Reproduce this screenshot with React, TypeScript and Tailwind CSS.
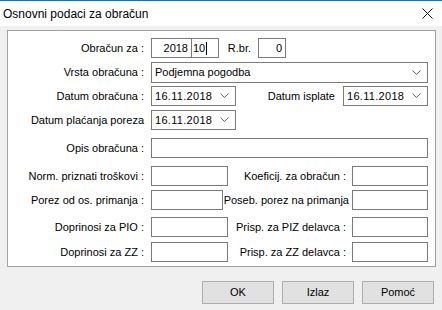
import React from "react";

function Chevron() {
  return (
    <svg width="9" height="6" viewBox="0 0 9 6" className="shrink-0">
      <polyline points="0.5,0.5 4.5,4.5 8.5,0.5" fill="none" stroke="#606060" strokeWidth="1" />
    </svg>
  );
}

function Label({ text, w = "w-[136px]" }: { text: string; w?: string }) {
  return <div className={`${w} shrink-0 text-right whitespace-nowrap pr-0`}>{text}</div>;
}

function Box({ w, h = "h-[20px]", children, extra = "" }: { w: string; h?: string; children?: React.ReactNode; extra?: string }) {
  return (
    <div className={`${w} ${h} shrink-0 border border-[#7a7a7a] bg-white flex items-center ${extra}`}>{children}</div>
  );
}

function DateBox({ w }: { w: string }) {
  return (
    <Box w={w} extra="pl-[3px] pr-[6px] justify-between">
      <span className="tracking-[0.3px]">16.11.2018</span>
      <Chevron />
    </Box>
  );
}

export default function App() {
  return (
    <div className="w-[442px] h-[310px] bg-[#f0f0f0] flex flex-col font-['Liberation_Sans',Arial,sans-serif] text-[11px] leading-none text-black overflow-hidden">
      <div className="h-[26px] shrink-0 bg-white border-t border-[#0078d7] flex items-center justify-between pl-[3px] pr-[9px]">
        <span className="text-[12px] text-[#000]">Osnovni podaci za obračun</span>
        <svg width="11" height="11" viewBox="0 0 11 11">
          <line x1="0.5" y1="0.5" x2="10.5" y2="10.5" stroke="#111" strokeWidth="1" />
          <line x1="10.5" y1="0.5" x2="0.5" y2="10.5" stroke="#111" strokeWidth="1" />
        </svg>
      </div>

      <div className="ml-[7px] mt-[4px] w-[429px] border border-[#a0a0a0] bg-white pt-[7px] pb-[4px] flex flex-col">
        {/* Row 1 */}
        <div className="flex items-center h-[20px]">
          <Label text="Obračun za :" />
          <div className="ml-[7px] flex">
            <Box w="w-[41px]" extra="justify-end pr-[3px]">2018</Box>
            <Box w="w-[27px]" extra="border-l-0 pl-[1px]">
              <span>10</span>
              <span className="inline-block w-px h-[13px] bg-black ml-[1px]" />
            </Box>
          </div>
          <div className="w-[39px] shrink-0 text-right pr-[7px]">R.br.</div>
          <Box w="w-[28px]" extra="justify-end pr-[3px]">0</Box>
        </div>

        {/* Row 2 */}
        <div className="flex items-center h-[21px] mt-[4px]">
          <Label text="Vrsta obračuna :" />
          <Box w="w-[277px] ml-[7px]" h="h-[21px]" extra="pl-[3px] pr-[6px] justify-between">
            <span>Podjemna pogodba</span>
            <Chevron />
          </Box>
        </div>

        {/* Row 3 */}
        <div className="flex items-center h-[20px] mt-[3px]">
          <Label text="Datum obračuna :" />
          <div className="ml-[7px]"><DateBox w="w-[85px]" /></div>
          <div className="w-[107px] shrink-0 text-right pr-[8px]">Datum isplate</div>
          <DateBox w="w-[85px]" />
        </div>

        {/* Row 4 */}
        <div className="flex items-center h-[20px] mt-[4px]">
          <Label text="Datum plaćanja poreza" />
          <div className="ml-[7px]"><DateBox w="w-[85px]" /></div>
        </div>

        {/* Row 5 */}
        <div className="flex items-center h-[20px] mt-[8px]">
          <Label text="Opis obračuna :" />
          <Box w="w-[277px] ml-[7px]" />
        </div>

        {/* Row 6 */}
        <div className="flex items-center h-[20px] mt-[8px]">
          <Label text="Norm. priznati troškovi :" />
          <Box w="w-[77px] ml-[7px]" />
          <div className="w-[124px] shrink-0 text-right pr-[6px] whitespace-nowrap">Koeficij. za obračun :</div>
          <Box w="w-[76px]" />
        </div>

        {/* Row 7 */}
        <div className="flex items-center h-[20px] mt-[4px]">
          <Label text="Porez od os. primanja :" />
          <Box w="w-[72px] ml-[7px]" />
          <div className="w-[129px] shrink-0 flex justify-end pr-[3px] whitespace-nowrap">Poseb. porez na primanja</div>
          <Box w="w-[76px]" />
        </div>

        {/* Row 8 */}
        <div className="flex items-center h-[20px] mt-[7px]">
          <Label text="Doprinosi za PIO :" />
          <Box w="w-[77px] ml-[7px]" />
          <div className="w-[124px] shrink-0 text-right pr-[6px] whitespace-nowrap">Prisp. za PIZ delavca :</div>
          <Box w="w-[76px]" />
        </div>

        {/* Row 9 */}
        <div className="flex items-center h-[20px] mt-[5px]">
          <Label text="Doprinosi za ZZ :" />
          <Box w="w-[77px] ml-[7px]" />
          <div className="w-[124px] shrink-0 text-right pr-[6px] whitespace-nowrap">Prisp. za ZZ delavca :</div>
          <Box w="w-[76px]" />
        </div>
      </div>

      <div className="flex justify-end gap-[8px] pr-[8px] mt-[14px]">
        {["OK", "Izlaz", "Pomoć"].map((t) => (
          <div key={t} className="w-[72px] h-[23px] border border-[#adadad] bg-[#e1e1e1] flex items-center justify-center">
            {t}
          </div>
        ))}
      </div>
    </div>
  );
}
